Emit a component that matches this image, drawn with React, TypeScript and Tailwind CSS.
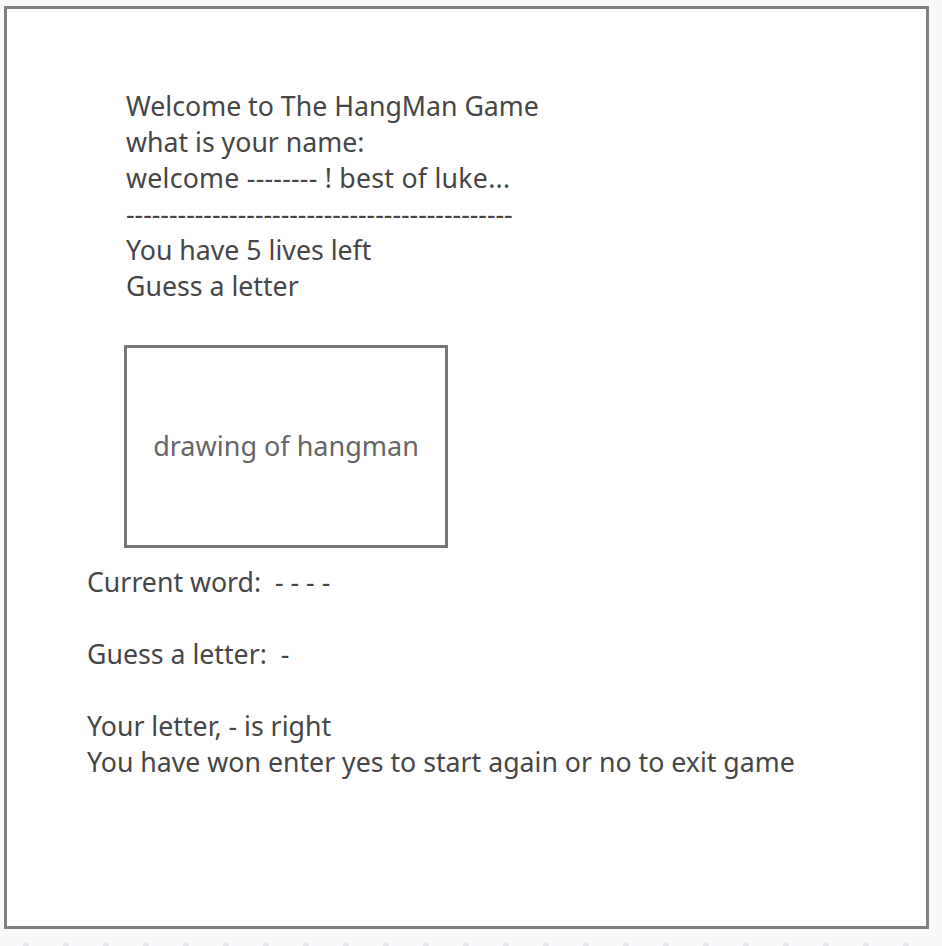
export default function App() {
  const intro = [
    "Welcome to The HangMan Game",
    "what is your name:",
    "welcome -------- ! best of luke...",
    "---------------------------------------------",
    "You have 5 lives left",
    "Guess a letter",
  ];

  return (
    <div className="w-[942px] h-[946px] bg-[#f8f8fa] overflow-hidden" style={{ fontFamily: '"Noto Sans", "Open Sans", sans-serif' }}>
      <div className="ml-[4px] mt-[6px] w-[925px] h-[923px] bg-white border-[3px] border-[#7f7f7f]">
        <div className="pl-[119px] pt-[79px] text-[26.7px] leading-[36px] text-[#464646]">
          {intro.map((line, i) => (
            <div key={i} className={i === 2 ? "tracking-[0.25px]" : ""}>{line}</div>
          ))}
        </div>
        <div className="ml-[117px] mt-[41px] w-[324px] h-[203px] border-[3px] border-[#777] flex items-center justify-center">
          <span className="text-[27px] text-[#666]">drawing of hangman</span>
        </div>
        <div className="pl-[80px] pt-[16px] text-[26.7px] leading-[36px] text-[#464646]">
          <div>Current word:&nbsp; - - - -</div>
          <div className="mt-[36px]">Guess a letter:&nbsp; -</div>
          <div className="mt-[36px]">Your letter, - is right</div>
          <div>You have won enter yes to start again or no to exit game</div>
        </div>
      </div>
      <div className="mt-[14px] pl-[23px] flex gap-[34px]">
        {Array.from({ length: 24 }).map((_, i) => (
          <span key={i} className="w-[6px] h-[3px] rounded-t-full bg-[#e6e6ea] shrink-0" />
        ))}
      </div>
    </div>
  );
}
